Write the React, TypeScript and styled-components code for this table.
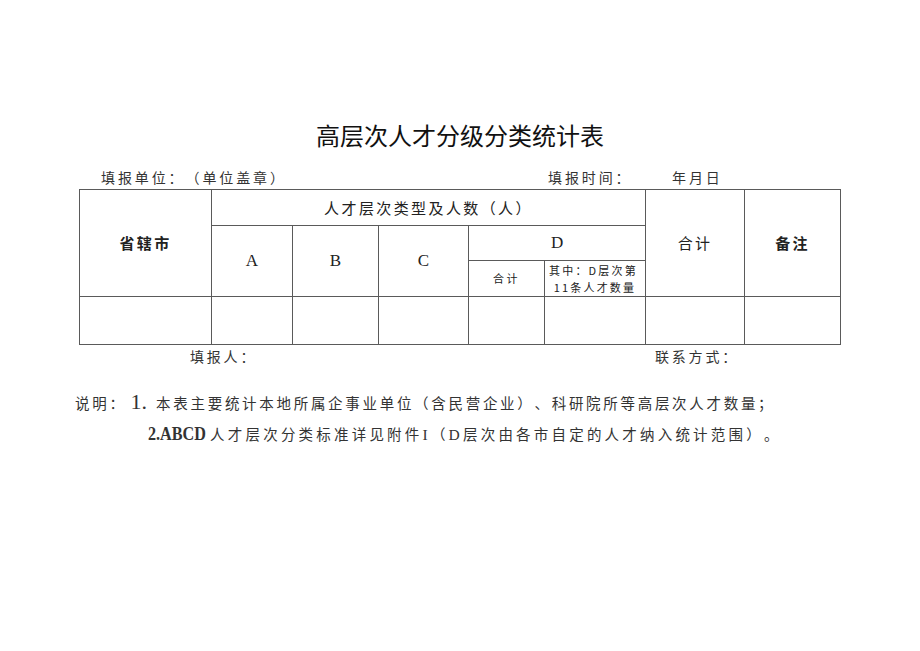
import styled, { createGlobalStyle } from "styled-components";

const GlobalStyle = createGlobalStyle`
    html, body {
        margin: 0;
        padding: 0;
        background: #ffffff;
    }
    body {
        font-family: "Noto Sans CJK SC", "Noto Sans", sans-serif;
        color: #222;
        text-spacing-trim: space-all;
    }
`;

const Page = styled.div`
    width: 920px;
    height: 651px;
    box-sizing: border-box;
    padding: 120px 79px 0 79px;
    background: #fff;
`;

const Title = styled.h1`
    margin: 0;
    text-align: center;
    font-size: 24px;
    font-weight: 400;
    line-height: 30px;
    color: #111;
`;

const InfoRow = styled.div`
    display: flex;
    align-items: center;
    height: 20px;
    margin-top: 17px;
    padding-left: 22px;
    font-size: 14px;
    letter-spacing: 2.9px;
    color: #333;
`;

const Field = styled.span<{ $w?: number }>`
    display: inline-block;
    width: ${(p) => (p.$w ? `${p.$w}px` : "auto")};
    white-space: nowrap;
    line-height: 20px;
`;

const Sheet = styled.table`
    width: 762px;
    margin-top: 2px;
    border-collapse: collapse;
    table-layout: fixed;
    color: #222;
`;

const Cell = styled.td<{ $h?: number; $bold?: boolean; $size?: number; $latin?: boolean }>`
    border: 1px solid #5a5a5a;
    padding: 0;
    height: ${(p) => (p.$h ? `${p.$h}px` : "auto")};
    text-align: center;
    vertical-align: middle;
    font-size: ${(p) => p.$size ?? 15}px;
    font-weight: ${(p) => (p.$bold ? 700 : 400)};
    font-family: ${(p) =>
        p.$latin
            ? `"Liberation Serif", "Noto Sans CJK SC", serif`
            : `"Noto Sans CJK SC", "Noto Sans", sans-serif`};
    letter-spacing: ${(p) => (p.$latin ? 0 : 2.4)}px;
    line-height: 1.3;
`;

const SmallText = styled.div`
    font-size: 11px;
    letter-spacing: 2.2px;
    line-height: 17px;
    text-align: left;
    padding-left: 4px;
`;

const SignRow = styled.div`
    display: flex;
    height: 22px;
    align-items: center;
    padding-left: 111px;
    font-size: 14px;
    letter-spacing: 2.8px;
    color: #333;
`;

const Notes = styled.div`
    margin-top: 19px;
    margin-left: -4px;
    font-size: 14.5px;
    color: #333;
`;

const NoteLine = styled.div<{ $indent?: number; $spacing: number }>`
    line-height: 31px;
    padding-left: ${(p) => p.$indent ?? 0}px;
    letter-spacing: ${(p) => p.$spacing}px;
    white-space: nowrap;
`;

const BigNum = styled.span`
    font-family: "Liberation Serif", serif;
    font-size: 22px;
    letter-spacing: 0;
    margin: 0 9px 0 4px;
`;

const Latin = styled.span`
    display: inline-block;
    font-family: "Liberation Serif", serif;
    font-weight: 700;
    font-size: 19px;
    letter-spacing: 0;
    transform: scaleX(0.85);
    transform-origin: left center;
    margin-right: -6px;
`;

const SerifChar = styled.span`
    font-family: "Liberation Serif", serif;
    font-size: 15.5px;
`;

const widths = [132, 81, 86, 90, 76, 101, 99, 96];

export default function App() {
    return (
        <>
            <GlobalStyle />
            <Page>
                <Title>高层次人才分级分类统计表</Title>

                <InfoRow>
                    <Field $w={447}>填报单位：（单位盖章）</Field>
                    <Field $w={124}>填报时间：</Field>
                    <Field>年月日</Field>
                </InfoRow>

                <Sheet>
                    <colgroup>
                        {widths.map((w, i) => (
                            <col key={i} style={{ width: w }} />
                        ))}
                    </colgroup>
                    <tbody>
                        <tr>
                            <Cell rowSpan={3} $bold>省辖市</Cell>
                            <Cell colSpan={5} $h={35}>人才层次类型及人数（人）</Cell>
                            <Cell rowSpan={3}>合计</Cell>
                            <Cell rowSpan={3} $bold>备注</Cell>
                        </tr>
                        <tr>
                            <Cell rowSpan={2} $latin $size={17}>A</Cell>
                            <Cell rowSpan={2} $latin $size={17}>B</Cell>
                            <Cell rowSpan={2} $latin $size={17}>C</Cell>
                            <Cell colSpan={2} $h={34} $latin $size={17}>D</Cell>
                        </tr>
                        <tr>
                            <Cell $h={35} $size={11}>合计</Cell>
                            <Cell $h={35}>
                                <SmallText>
                                    其中：D层次第
                                    <br />
                                    &nbsp;11条人才数量
                                </SmallText>
                            </Cell>
                        </tr>
                        <tr>
                            {widths.map((_, i) => (
                                <Cell key={i} $h={47} />
                            ))}
                        </tr>
                    </tbody>
                </Sheet>

                <SignRow>
                    <Field $w={465}>填报人：</Field>
                    <Field>联系方式：</Field>
                </SignRow>

                <Notes>
                    <NoteLine $spacing={2.7}>
                        说明：<BigNum>1.</BigNum>本表主要统计本地所属企事业单位（含民营企业）、科研院所等高层次人才数量；
                    </NoteLine>
                    <NoteLine $indent={73} $spacing={3.2}>
                        <Latin>2.ABCD</Latin>人才层次分类标准详见附件<SerifChar>I</SerifChar>（<SerifChar>D</SerifChar>层次由各市自定的人才纳入统计范围）。
                    </NoteLine>
                </Notes>
            </Page>
        </>
    );
}
